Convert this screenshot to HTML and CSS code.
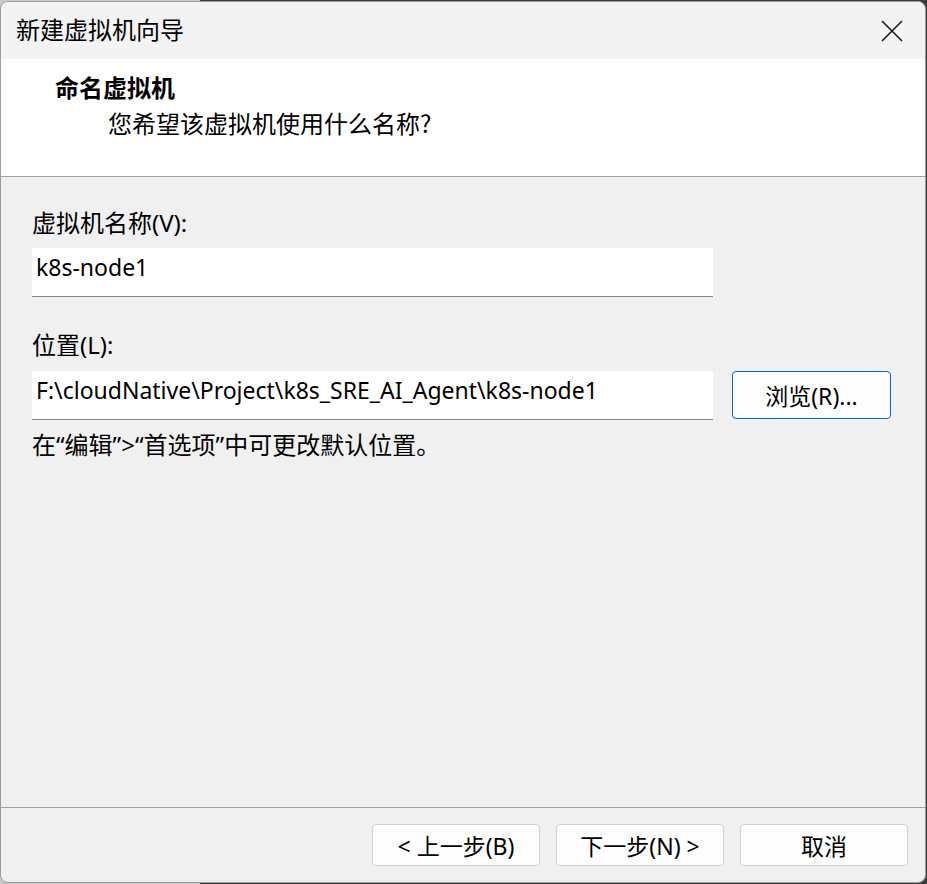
FILE: index.html
```html
<!DOCTYPE html>
<html lang="zh-CN">
<head>
<meta charset="utf-8">
<title>新建虚拟机向导</title>
<link rel="stylesheet" href="styles.css">
</head>
<body>
<div class="window">
  <div class="titlebar">
    <span class="title">新建虚拟机向导</span>
    <svg class="close" width="22" height="22" viewBox="0 0 22 22"><path d="M1 1 L21 21 M21 1 L1 21" stroke="#1b1b1b" stroke-width="1.6" fill="none"/></svg>
  </div>
  <div class="header">
    <div class="heading">命名虚拟机</div>
    <div class="subheading">您希望该虚拟机使用什么名称?</div>
  </div>
  <div class="content">
    <div class="label">虚拟机名称(V):</div>
    <div class="field field-name">k8s-node1</div>
    <div class="label label-second">位置(L):</div>
    <div class="row">
      <div class="field">F:\cloudNative\Project\k8s_SRE_AI_Agent\k8s-node1</div>
      <button class="btn btn-browse">浏览(R)...</button>
    </div>
    <div class="hint">在“编辑”&gt;“首选项”中可更改默认位置。</div>
  </div>
  <div class="footer">
    <button class="btn btn-footer">&lt; 上一步(B)</button>
    <button class="btn btn-footer">下一步(N) &gt;</button>
    <button class="btn btn-footer">取消</button>
  </div>
</div>
</body>
</html>
```

FILE: styles.css
```css
html, body {
  margin: 0;
  padding: 0;
}
body {
  width: 927px;
  height: 884px;
  background: linear-gradient(to right, #c9c9c9 200px, #3a3a3a 200px);
  font-family: "Noto Sans", "Noto Sans CJK SC", sans-serif;
  color: #000;
  overflow: hidden;
}
.window {
  box-sizing: border-box;
  width: 926px;
  height: 882px;
  margin-top: 1px;
  border: 1px solid #9c9c9c;
  border-radius: 8px;
  overflow: hidden;
  background: #f0f0f0;
  display: flex;
  flex-direction: column;
}
.titlebar {
  height: 57px;
  flex: none;
  background: #f3f3f3;
  display: flex;
  align-items: center;
  justify-content: space-between;
  padding: 0 22px 0 15px;
}
.title {
  font-family: "Noto Sans CJK SC", sans-serif;
  font-size: 24px;
  line-height: 30px;
  color: #000;
  margin-top: -3px;
}
.close {
  display: block;
}
.header {
  flex: none;
  height: 118px;
  box-sizing: border-box;
  background: #fff;
  border-bottom: 1px solid #a0a0a0;
  padding: 13px 0 0 54px;
}
.heading {
  font-family: "Noto Sans CJK SC", sans-serif;
  font-weight: 700;
  font-size: 24px;
  line-height: 30px;
}
.subheading {
  font-family: "Noto Sans CJK SC", sans-serif;
  font-size: 24px;
  line-height: 30px;
  margin-top: 6px;
  padding-left: 53px;
}
.content {
  flex: 1;
  padding: 31px 0 0 31px;
}
.label {
  font-size: 24px;
  line-height: 30px;
}
.label-second {
  margin-top: 33px;
}
.field {
  box-sizing: border-box;
  width: 681px;
  height: 49px;
  background: #fff;
  border-bottom: 1px solid #868686;
  padding: 4px 4px;
  font-size: 23px;
  line-height: 30px;
  white-space: nowrap;
}
.field-name {
  margin-top: 10px;
}
.row {
  display: flex;
  align-items: flex-start;
  gap: 19px;
  margin-top: 11px;
}
.btn {
  box-sizing: border-box;
  font-family: "Noto Sans", "Noto Sans CJK SC", sans-serif;
  font-size: 23px;
  color: #000;
  background: #fdfdfd;
  border: 1px solid #d0d0d0;
  border-radius: 4px;
  padding: 0;
}
.btn-browse {
  width: 159px;
  height: 48px;
  border-color: #0067c0;
}
.hint {
  margin-top: 10px;
  font-size: 24px;
  line-height: 30px;
}
.footer {
  flex: none;
  height: 75px;
  box-sizing: border-box;
  border-top: 1px solid #a0a0a0;
  display: flex;
  justify-content: flex-end;
  gap: 16px;
  padding: 16px 17px 0 0;
}
.btn-footer {
  width: 168px;
  height: 42px;
}
```
